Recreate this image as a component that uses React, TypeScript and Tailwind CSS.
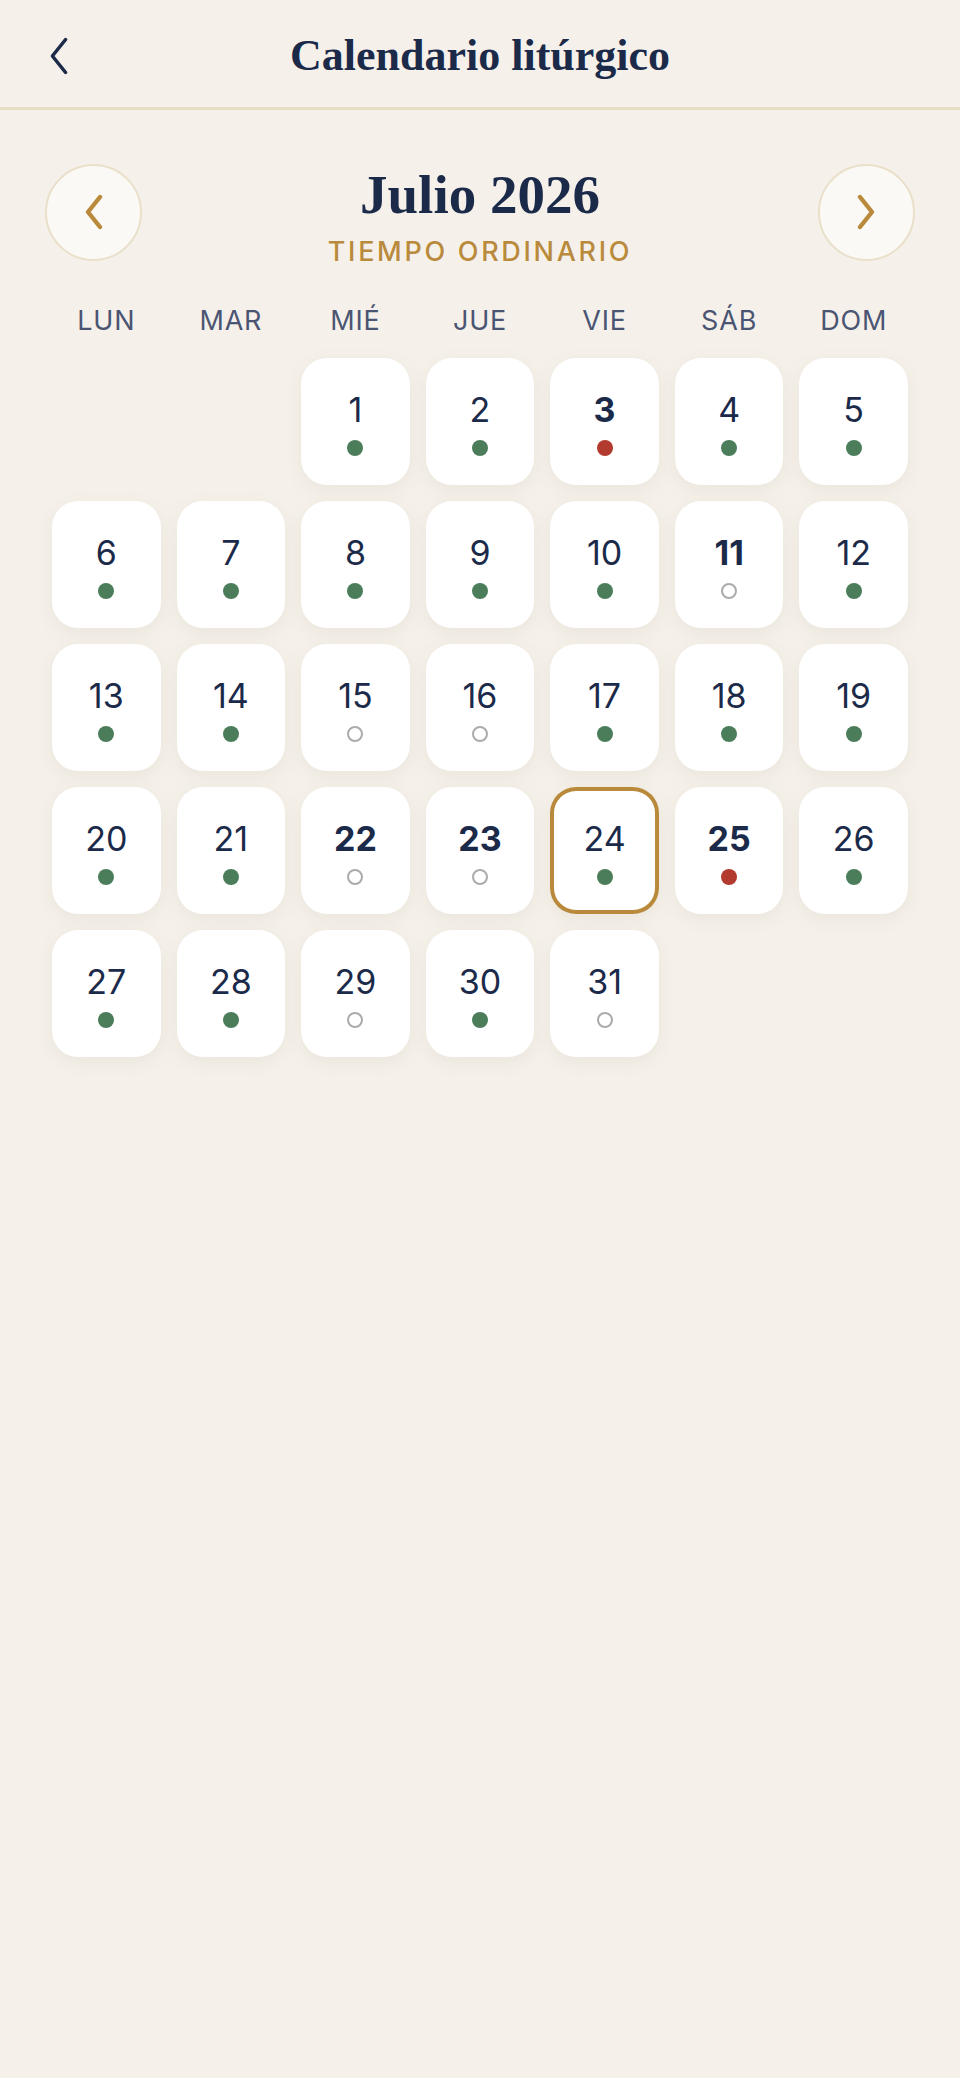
type Mark = "green" | "red" | "empty";

interface Day {
  n: number;
  mark: Mark;
  bold?: boolean;
}

const weekdays = ["LUN", "MAR", "MIÉ", "JUE", "VIE", "SÁB", "DOM"];

// julio 2026 arranca en miércoles
const days: Day[] = [
  { n: 1, mark: "green" },
  { n: 2, mark: "green" },
  { n: 3, mark: "red", bold: true },
  { n: 4, mark: "green" },
  { n: 5, mark: "green" },
  { n: 6, mark: "green" },
  { n: 7, mark: "green" },
  { n: 8, mark: "green" },
  { n: 9, mark: "green" },
  { n: 10, mark: "green" },
  { n: 11, mark: "empty", bold: true },
  { n: 12, mark: "green" },
  { n: 13, mark: "green" },
  { n: 14, mark: "green" },
  { n: 15, mark: "empty" },
  { n: 16, mark: "empty" },
  { n: 17, mark: "green" },
  { n: 18, mark: "green" },
  { n: 19, mark: "green" },
  { n: 20, mark: "green" },
  { n: 21, mark: "green" },
  { n: 22, mark: "empty", bold: true },
  { n: 23, mark: "empty", bold: true },
  { n: 24, mark: "green" },
  { n: 25, mark: "red", bold: true },
  { n: 26, mark: "green" },
  { n: 27, mark: "green" },
  { n: 28, mark: "green" },
  { n: 29, mark: "empty" },
  { n: 30, mark: "green" },
  { n: 31, mark: "empty" },
];

const today = 24;

function Chevron({ dir, className }: { dir: "left" | "right"; className: string }) {
  return (
    <svg viewBox="0 0 20 36" className={className} fill="none" stroke="currentColor" strokeLinecap="round" strokeLinejoin="round">
      {dir === "left" ? <polyline points="16,3 4,18 16,33" /> : <polyline points="4,3 16,18 4,33" />}
    </svg>
  );
}

function Dot({ mark }: { mark: Mark }) {
  if (mark === "empty") {
    return <span className="mt-[13px] block w-[16px] h-[16px] rounded-full border-2 border-[#ABABAB]" />;
  }
  return (
    <span
      className={
        mark === "red"
          ? "mt-[13px] block w-[16px] h-[16px] rounded-full bg-[#B23A2F]"
          : "mt-[13px] block w-[16px] h-[16px] rounded-full bg-[#4B7D5A]"
      }
    />
  );
}

function DayCell({ day }: { day: Day }) {
  const selected = day.n === today;
  return (
    <button
      className={
        "h-[127px] rounded-[26px] bg-white flex flex-col items-center pt-[35px] shadow-[0_5px_18px_rgba(110,90,50,0.08)] " +
        (selected ? "ring-4 ring-inset ring-[#B98A3B]" : "")
      }
    >
      <span
        className={
          "block text-[34px] leading-[34px] text-[#1C2A4A] " + (day.bold ? "font-bold" : "font-normal")
        }
      >
        {day.n}
      </span>
      <Dot mark={day.mark} />
    </button>
  );
}

export default function App() {
  return (
    <div className="min-h-[2078px] bg-[#F5F1EA] font-['Inter',sans-serif]">
      {/* Top bar */}
      <header className="h-[110px] grid grid-cols-[1fr_auto_1fr] items-center border-b-[3px] border-[#E8DCC3]">
        <div className="pl-[48px] pt-[4px]">
          <Chevron dir="left" className="w-[22px] h-[40px] text-[#1C2A4A] stroke-[3.2]" />
        </div>
        <h1 className="font-['Liberation_Serif',serif] font-bold text-[44px] leading-none text-[#1C2A4A] pt-[4px]">
          Calendario litúrgico
        </h1>
        <div />
      </header>

      {/* Month navigation */}
      <div className="mt-[49px] px-[45px] flex items-center justify-between">
        <button className="w-[97px] h-[97px] rounded-full bg-[#FBF9F5] border-2 border-[#EADFC8] flex items-center justify-center">
          <Chevron dir="left" className="w-[22px] h-[36px] text-[#B98A3B] stroke-[4.4]" />
        </button>
        <div className="flex flex-col items-center pt-[8px]">
          <h2 className="font-['Liberation_Serif',serif] font-bold text-[55px] leading-[56px] text-[#1C2A4A]">
            Julio 2026
          </h2>
          <p className="mt-[15px] text-[27px] leading-[27px] font-medium tracking-[0.1em] text-[#B98A3B]">
            TIEMPO ORDINARIO
          </p>
        </div>
        <button className="w-[97px] h-[97px] rounded-full bg-[#FBF9F5] border-2 border-[#EADFC8] flex items-center justify-center">
          <Chevron dir="right" className="w-[22px] h-[36px] text-[#B98A3B] stroke-[4.4]" />
        </button>
      </div>

      {/* Calendar */}
      <div className="px-[52px]">
        <div className="mt-[42px] grid grid-cols-7 gap-x-[16px]">
          {weekdays.map((w) => (
            <div key={w} className="text-center text-[27px] leading-[27px] tracking-[0.03em] text-[#4B5573]">
              {w}
            </div>
          ))}
        </div>
        <div className="mt-[24px] grid grid-cols-7 gap-x-[16px] gap-y-[16px]">
          <div />
          <div />
          {days.map((d) => (
            <DayCell key={d.n} day={d} />
          ))}
        </div>
      </div>
    </div>
  );
}
